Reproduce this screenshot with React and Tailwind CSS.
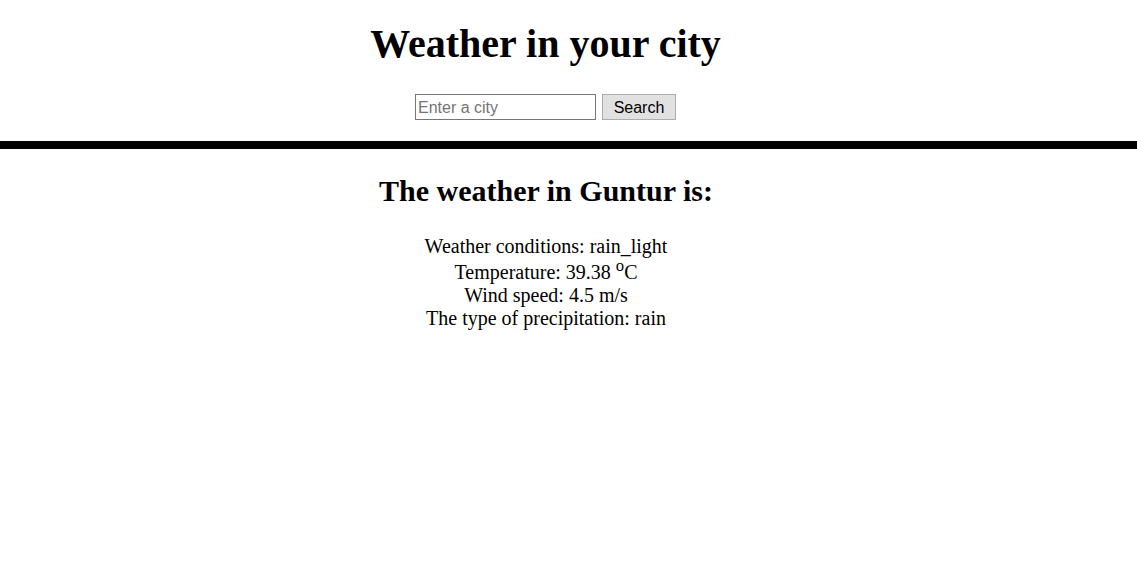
import { useState } from "react";

export default function App() {
  const [city, setCity] = useState("");

  const weather = {
    name: "Guntur",
    condition: "rain_light",
    temp: 39.38,
    wind: 4.5,
    precip: "rain",
  };

  return (
    <div className="min-h-screen bg-white text-black font-['Liberation_Serif','Times_New_Roman',serif]">
      {/* Header with search */}
      <div className="w-[1091px] text-center pt-[21px] pb-[21px]">
        <h1 className="text-[40px] font-bold leading-[46px]">Weather in your city</h1>
        <div className="flex justify-center items-center gap-[6px] mt-[27px]">
          <input
            type="text"
            value={city}
            onChange={(e) => setCity(e.target.value)}
            placeholder="Enter a city"
            className="w-[181px] h-[26px] border border-[#767676] px-[2px] pt-[2px] text-[16px] font-['Liberation_Sans',Arial,sans-serif] placeholder:text-[#757575] outline-none"
          />
          <button className="w-[74px] h-[26px] pt-[2px] bg-[#e1e1e1] border border-[#adadad] text-[16px] font-['Liberation_Sans',Arial,sans-serif] leading-none">
            Search
          </button>
        </div>
      </div>

      <div className="h-[8px] bg-black w-full" />

      {/* Result */}
      <div className="w-[1092px] text-center pt-[24px]">
        <h2 className="text-[30px] font-bold leading-[35px]">The weather in {weather.name} is:</h2>
        <div className="mt-[27px] text-[20px] leading-[23px]">
          <div>Weather conditions: {weather.condition}</div>
          <div className="pt-[3px]">
            Temperature: {weather.temp}{" "}
            <sup className="static align-super text-[smaller] leading-[0]">o</sup>C
          </div>
          <div>Wind speed: {weather.wind} m/s</div>
          <div>The type of precipitation: {weather.precip}</div>
        </div>
      </div>
    </div>
  );
}
